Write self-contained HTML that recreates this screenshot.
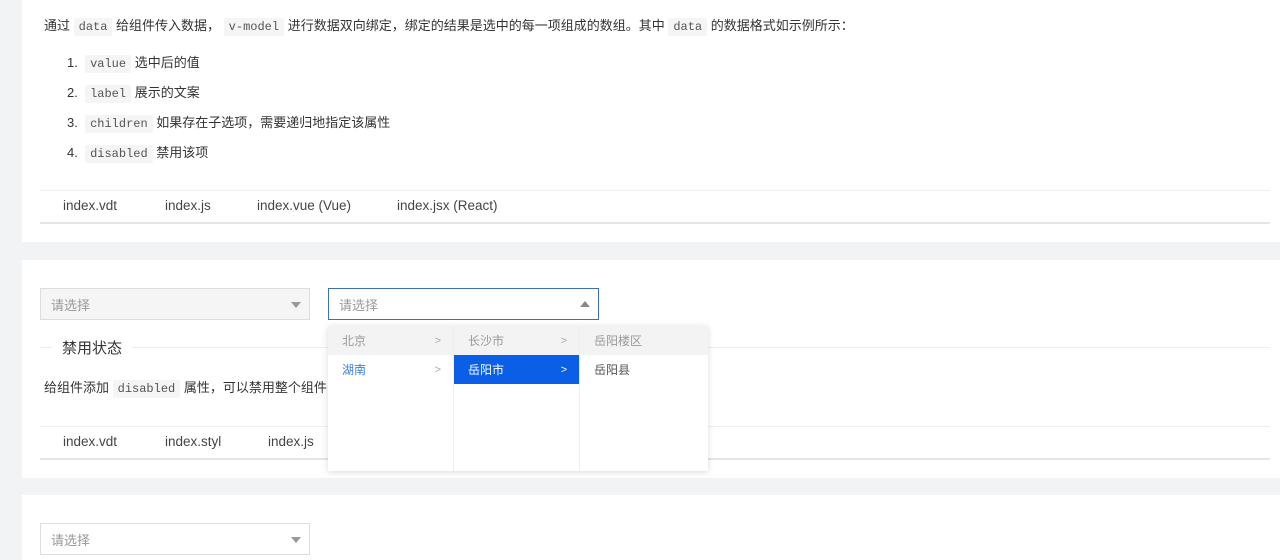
<!DOCTYPE html>
<html><head><meta charset="utf-8"><style>
*{box-sizing:border-box;margin:0;padding:0}
body{width:1280px;height:560px;overflow:hidden;background:#f2f3f5;font-family:"Liberation Sans","Noto Sans CJK SC",sans-serif;font-size:13px;color:#333;position:relative}
.card{position:absolute;left:22px;right:0;background:#fff}
.abs{position:absolute;white-space:nowrap}
code{font-family:"Liberation Mono",monospace;font-size:12px;background:#f5f5f5;padding:2px 5px;border-radius:2px;color:#555}
.tabs{position:absolute;left:18px;right:10px;height:34px;border-top:1px solid #eee;border-bottom:2px solid #e5e5e5}
.tabs span{position:absolute;top:7px;font-size:13.5px;color:#444}
.sel{position:absolute;height:32px;border:1px solid #ddd;color:#999;font-size:13px;padding:6px 10px}
.tri{position:absolute;right:8px;top:13px;width:0;height:0;border-left:5px solid transparent;border-right:5px solid transparent}
.col{position:absolute;top:0;width:126px;height:145px;border-right:1px solid #eee}
.it{height:29px;line-height:31px;padding-left:14px;font-size:12px;color:#555;position:relative}
.it i{position:absolute;right:12px;font-style:normal;color:#aaa;font-size:11px}
</style></head><body>
<div class="card" style="top:0;height:242px">
 <div class="abs" style="left:22px;top:15px">通过 <code>data</code> 给组件传入数据， <code>v-model</code> 进行数据双向绑定，绑定的结果是选中的每一项组成的数组。其中 <code>data</code> 的数据格式如示例所示：</div>
 <div class="abs" style="left:45px;top:52px">1.&nbsp; <code>value</code> 选中后的值</div>
 <div class="abs" style="left:45px;top:82px">2.&nbsp; <code>label</code> 展示的文案</div>
 <div class="abs" style="left:45px;top:112px">3.&nbsp; <code>children</code> 如果存在子选项，需要递归地指定该属性</div>
 <div class="abs" style="left:45px;top:142px">4.&nbsp; <code>disabled</code> 禁用该项</div>
 <div class="tabs" style="top:190px"><span style="left:23px">index.vdt</span><span style="left:125px">index.js</span><span style="left:217px">index.vue (Vue)</span><span style="left:357px">index.jsx (React)</span></div>
</div>
<div class="card" style="top:260px;height:218px">
 <div class="abs" style="left:18px;right:10px;top:87px;border-top:1px solid #eee"></div>
 <div class="abs" style="left:30px;top:77px;background:#fff;padding:0 10px;font-size:15px;color:#333">禁用状态</div>
 <div class="abs" style="left:22px;top:117px">给组件添加 <code>disabled</code> 属性，可以禁用整个组件；</div>
 <div class="tabs" style="top:166px"><span style="left:23px">index.vdt</span><span style="left:125px">index.styl</span><span style="left:228px">index.js</span></div>
</div>
<div class="card" style="top:495px;height:65px"></div>
<div class="sel" style="left:40px;top:288px;width:270px;background:#f5f5f5">请选择<div class="tri" style="border-top:6px solid #999"></div></div>
<div class="sel" style="left:328px;top:288px;width:271px;background:#fff;border-color:#3c6fb5">请选择<div class="tri" style="border-bottom:6px solid #888;top:12px"></div></div>
<div class="sel" style="left:40px;top:523px;width:270px;background:#fff">请选择<div class="tri" style="border-top:6px solid #999"></div></div>
<div class="abs" style="left:328px;top:326px;width:380px;height:145px;background:#fff;box-shadow:0 1px 6px rgba(0,0,0,.15)">
 <div class="col" style="left:0"><div class="it" style="background:#f3f3f3;color:#999">北京<i>&gt;</i></div><div class="it" style="color:#3b7dd8">湖南<i>&gt;</i></div></div>
 <div class="col" style="left:126px"><div class="it" style="background:#f3f3f3;color:#999">长沙市<i>&gt;</i></div><div class="it" style="background:#0a5fe6;color:#fff">岳阳市<i style="color:#fff">&gt;</i></div></div>
 <div class="col" style="left:252px;border:none;width:128px"><div class="it" style="background:#f3f3f3;color:#999">岳阳楼区</div><div class="it">岳阳县</div></div>
</div>
</body></html>
